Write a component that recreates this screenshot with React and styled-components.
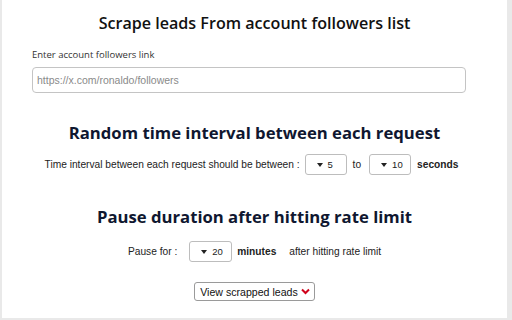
import React from 'react'
import styled, { createGlobalStyle } from 'styled-components'

const Global = createGlobalStyle`
    html, body {
        margin: 0;
        padding: 0;
        background: #e9e9e9;
    }
    body {
        font-family: "Liberation Sans", Arial, sans-serif;
    }
`

const Page = styled.div`
    background: #ffffff;
    box-sizing: border-box;
    height: 318px;
    margin: 0 5px 0 2px;
    padding-top: 13px;
`

const Title = styled.h1`
    color: #111;
    font-family: "Open Sans", sans-serif;
    font-size: 16.1px;
    font-weight: 600;
    line-height: 20px;
    margin: 0;
    text-align: center;
`

const Heading = styled.h2`
    color: #0f1730;
    font-family: "Open Sans", sans-serif;
    font-size: 16.7px;
    font-weight: 700;
    line-height: 20px;
    margin: ${(p) => p.$top}px 0 0;
    text-align: center;
`

const Field = styled.div`
    display: flex;
    flex-direction: column;
    gap: 5px;
    margin: 15px 41px 0 30px;
`

const Label = styled.label`
    color: #333;
    font-family: "Open Sans", sans-serif;
    font-size: 9.5px;
    line-height: 14px;
`

const Input = styled.input`
    border: 1px solid #c4c4c4;
    border-radius: 4px;
    box-sizing: border-box;
    font-family: "Liberation Sans", Arial, sans-serif;
    font-size: 10.5px;
    height: 26px;
    outline: none;
    padding: 0 4px;
    width: 100%;

    &::placeholder {
        color: #8a8a8a;
    }
`

const Row = styled.div`
    align-items: center;
    color: #222;
    display: flex;
    font-size: 10.2px;
    justify-content: center;
    margin-top: ${(p) => p.$top}px;
`

const Text = styled.span`
    font-weight: ${(p) => (p.$bold ? 700 : 400)};
    margin: 0 ${(p) => p.$right ?? p.$gap ?? 0}px 0 ${(p) => p.$gap || 0}px;
`

const NumBox = styled.div`
    align-items: center;
    border: 1px solid #bdbdbd;
    border-radius: 3px;
    box-sizing: border-box;
    display: flex;
    font-size: 9.5px;
    gap: 5px;
    height: 21px;
    padding-left: 11px;
    width: ${(p) => p.$w}px;
`

const Caret = styled.span`
    border-left: 3px solid transparent;
    border-right: 3px solid transparent;
    border-top: 4px solid #222;
    display: inline-block;
    height: 0;
    width: 0;
`

const ButtonRow = styled.div`
    display: flex;
    justify-content: center;
    margin-top: 20px;
`

const ViewButton = styled.button`
    align-items: center;
    background: #fff;
    border: 1px solid #9a9a9a;
    border-radius: 3px;
    color: #111;
    display: flex;
    font-family: "Liberation Sans", Arial, sans-serif;
    font-size: 10.6px;
    gap: 3px;
    height: 19px;
    padding: 0 4px 0 5px;
`

function NumberBox({ value, width }) {
    return (
        <NumBox $w={width}>
            <Caret />
            <span>{value}</span>
        </NumBox>
    )
}

export default function App() {
    return (
        <>
            <Global />
            <Page>
                <Title>Scrape leads From account followers list</Title>
                <Field>
                    <Label>Enter account followers link</Label>
                    <Input placeholder="https://x.com/ronaldo/followers" />
                </Field>
                <Heading $top={30}>Random time interval between each request</Heading>
                <Row $top={11}>
                    <Text $right={5}>Time interval between each request should be between :</Text>
                    <NumberBox value="5" width={42} />
                    <Text $gap={6} $right={8}>to</Text>
                    <NumberBox value="10" width={42} />
                    <Text $bold $gap={6}>seconds</Text>
                </Row>
                <Heading $top={32}>Pause duration after hitting rate limit</Heading>
                <Row $top={14}>
                    <Text $right={12}>Pause for :</Text>
                    <NumberBox value="20" width={43} />
                    <Text $bold $gap={5} $right={13}>minutes</Text>
                    <Text>after hitting rate limit</Text>
                </Row>
                <ButtonRow>
                    <ViewButton>
                        View scrapped leads
                        <svg width="9" height="7" viewBox="0 0 9 7">
                            <path d="M1 1.5 L4.5 5 L8 1.5" stroke="#d0021b" strokeWidth="2" fill="none" />
                        </svg>
                    </ViewButton>
                </ButtonRow>
            </Page>
        </>
    )
}
